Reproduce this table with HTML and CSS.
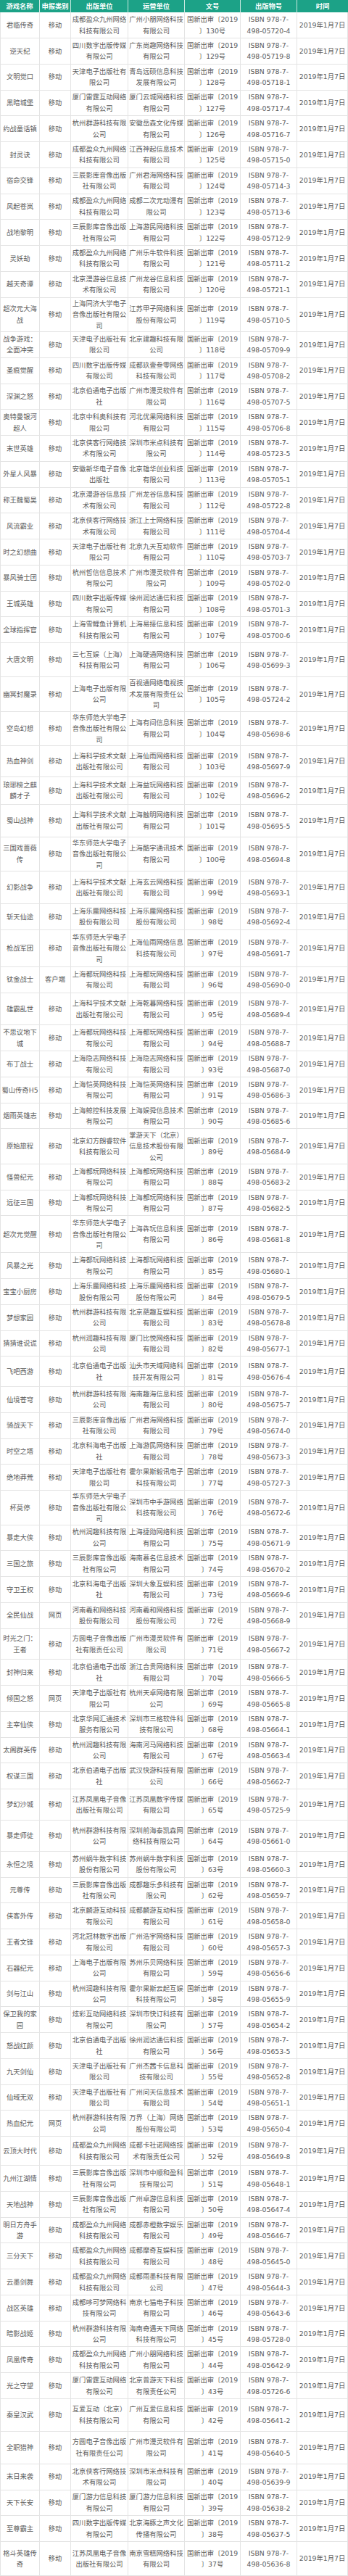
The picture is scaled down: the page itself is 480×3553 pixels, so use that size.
FILE: index.html
```html
<!DOCTYPE html>
<html lang="zh-CN">
<head>
<meta charset="utf-8">
<title>2019年1月国产网络游戏审批信息</title>
<link rel="stylesheet" href="styles.css">
</head>
<body>
<table class="games">
<colgroup>
<col class="c-name"><col class="c-type"><col class="c-pub"><col class="c-op"><col class="c-no"><col class="c-isbn"><col class="c-date">
</colgroup>
<thead>
<tr><th>游戏名称</th><th>申报类别</th><th>出版单位</th><th>运营单位</th><th>文号</th><th>出版物号</th><th>时间</th></tr>
</thead>
<tbody>
<tr><td>君临传奇</td><td>移动</td><td>成都盈众九州网络科技有限公司</td><td>广州小朋网络科技有限公司</td><td>国新出审〔2019<wbr>〕130号</td><td>ISBN 978-7-<wbr>498-05720-4</td><td>2019年1月7日</td></tr>
<tr><td>逆天纪</td><td>移动</td><td>四川数字出版传媒有限公司</td><td>广东尚趣网络科技有限公司</td><td>国新出审〔2019<wbr>〕129号</td><td>ISBN 978-7-<wbr>498-05719-8</td><td>2019年1月7日</td></tr>
<tr><td>文明觉口</td><td>移动</td><td>天津电子出版社有限公司</td><td>青岛远硕信息科技发展有限公司</td><td>国新出审〔2019<wbr>〕128号</td><td>ISBN 978-7-<wbr>498-05718-1</td><td>2019年1月7日</td></tr>
<tr><td>黑暗城堡</td><td>移动</td><td>厦门雷霆互动网络有限公司</td><td>厦门云城网络科技有限公司</td><td>国新出审〔2019<wbr>〕127号</td><td>ISBN 978-7-<wbr>498-05717-4</td><td>2019年1月7日</td></tr>
<tr><td>约战童话镇</td><td>移动</td><td>杭州群游科技有限公司</td><td>安徽岳森文化传媒有限公司</td><td>国新出审〔2019<wbr>〕126号</td><td>ISBN 978-7-<wbr>498-05716-7</td><td>2019年1月7日</td></tr>
<tr><td>封灵诀</td><td>移动</td><td>成都盈众九州网络科技有限公司</td><td>江西神起信息技术有限公司</td><td>国新出审〔2019<wbr>〕125号</td><td>ISBN 978-7-<wbr>498-05715-0</td><td>2019年1月7日</td></tr>
<tr><td>宿命交锋</td><td>移动</td><td>三辰影库音像出版社有限公司</td><td>广州君海网络科技有限公司</td><td>国新出审〔2019<wbr>〕124号</td><td>ISBN 978-7-<wbr>498-05714-3</td><td>2019年1月7日</td></tr>
<tr><td>风起苍岚</td><td>移动</td><td>成都盈众九州网络科技有限公司</td><td>成都二次元动漫有限公司</td><td>国新出审〔2019<wbr>〕123号</td><td>ISBN 978-7-<wbr>498-05713-6</td><td>2019年1月7日</td></tr>
<tr><td>战地黎明</td><td>移动</td><td>三辰影库音像出版社有限公司</td><td>上海游民网络科技有限公司</td><td>国新出审〔2019<wbr>〕122号</td><td>ISBN 978-7-<wbr>498-05712-9</td><td>2019年1月7日</td></tr>
<tr><td>灵妖劫</td><td>移动</td><td>成都盈众九州网络科技有限公司</td><td>广州乐牛软件科技有限公司</td><td>国新出审〔2019<wbr>〕121号</td><td>ISBN 978-7-<wbr>498-05711-2</td><td>2019年1月7日</td></tr>
<tr><td>越天奇谭</td><td>移动</td><td>北京漫游谷信息技术有限公司</td><td>广州龙谷信息科技有限公司</td><td>国新出审〔2019<wbr>〕120号</td><td>ISBN 978-7-<wbr>498-05721-1</td><td>2019年1月7日</td></tr>
<tr class="h47"><td>超次元大海战</td><td>移动</td><td>上海同济大学电子音像出版社有限公司</td><td>江苏甲子网络科技股份有限公司</td><td>国新出审〔2019<wbr>〕119号</td><td>ISBN 978-7-<wbr>498-05710-5</td><td>2019年1月7日</td></tr>
<tr><td>战争游戏：全面冲突</td><td>移动</td><td>天津电子出版社有限公司</td><td>北京建趣科技有限公司</td><td>国新出审〔2019<wbr>〕118号</td><td>ISBN 978-7-<wbr>498-05709-9</td><td>2019年1月7日</td></tr>
<tr><td>圣痕觉醒</td><td>移动</td><td>四川数字出版传媒有限公司</td><td>成都玖壹叁零网络科技有限公司</td><td>国新出审〔2019<wbr>〕117号</td><td>ISBN 978-7-<wbr>498-05708-2</td><td>2019年1月7日</td></tr>
<tr><td>深渊之怒</td><td>移动</td><td>北京伯通电子出版社</td><td>广州市漫灵软件有限公司</td><td>国新出审〔2019<wbr>〕116号</td><td>ISBN 978-7-<wbr>498-05707-5</td><td>2019年1月7日</td></tr>
<tr><td>奥特曼银河超人</td><td>移动</td><td>北京中科奥科技有限公司</td><td>河北优果网络科技有限公司</td><td>国新出审〔2019<wbr>〕115号</td><td>ISBN 978-7-<wbr>498-05706-8</td><td>2019年1月7日</td></tr>
<tr><td>末世英雄</td><td>移动</td><td>北京侠客行网络技术有限公司</td><td>深圳市米点科技有限公司</td><td>国新出审〔2019<wbr>〕114号</td><td>ISBN 978-7-<wbr>498-05723-5</td><td>2019年1月7日</td></tr>
<tr><td>外星人风暴</td><td>移动</td><td>安徽新华电子音像出版社</td><td>北京雄华创业科技有限公司</td><td>国新出审〔2019<wbr>〕113号</td><td>ISBN 978-7-<wbr>498-05705-1</td><td>2019年1月7日</td></tr>
<tr><td>称王魏蜀吴</td><td>移动</td><td>北京漫游谷信息技术有限公司</td><td>广州龙谷信息科技有限公司</td><td>国新出审〔2019<wbr>〕112号</td><td>ISBN 978-7-<wbr>498-05722-8</td><td>2019年1月7日</td></tr>
<tr><td>风流霸业</td><td>移动</td><td>北京侠客行网络技术有限公司</td><td>浙江上士网络科技有限公司</td><td>国新出审〔2019<wbr>〕111号</td><td>ISBN 978-7-<wbr>498-05704-4</td><td>2019年1月7日</td></tr>
<tr><td>时之幻想曲</td><td>移动</td><td>天津电子出版社有限公司</td><td>北京九天互动软件有限公司</td><td>国新出审〔2019<wbr>〕110号</td><td>ISBN 978-7-<wbr>498-05703-7</td><td>2019年1月7日</td></tr>
<tr><td>暴风骑士团</td><td>移动</td><td>杭州哲信信息技术有限公司</td><td>广州市漫灵软件有限公司</td><td>国新出审〔2019<wbr>〕109号</td><td>ISBN 978-7-<wbr>498-05702-0</td><td>2019年1月7日</td></tr>
<tr><td>王城英雄</td><td>移动</td><td>四川数字出版传媒有限公司</td><td>徐州润达通信科技有限公司</td><td>国新出审〔2019<wbr>〕108号</td><td>ISBN 978-7-<wbr>498-05701-3</td><td>2019年1月7日</td></tr>
<tr><td>全球指挥官</td><td>移动</td><td>上海雪鲤鱼计算机科技有限公司</td><td>上海易接信息科技有限公司</td><td>国新出审〔2019<wbr>〕107号</td><td>ISBN 978-7-<wbr>498-05700-6</td><td>2019年1月7日</td></tr>
<tr class="h47"><td>大唐文明</td><td>移动</td><td>三七互娱（上海）科技有限公司</td><td>上海硬通网络科技有限公司</td><td>国新出审〔2019<wbr>〕106号</td><td>ISBN 978-7-<wbr>498-05699-3</td><td>2019年1月7日</td></tr>
<tr class="h47"><td>幽冥封魔录</td><td>移动</td><td>上海电子出版有限公司</td><td>百视通网络电视技术发展有限责任公司</td><td>国新出审〔2019<wbr>〕105号</td><td>ISBN 978-7-<wbr>498-05724-2</td><td>2019年1月7日</td></tr>
<tr class="h47"><td>空岛幻想</td><td>移动</td><td>华东师范大学电子音像出版社有限公司</td><td>上海有间信息科技有限公司</td><td>国新出审〔2019<wbr>〕104号</td><td>ISBN 978-7-<wbr>498-05698-6</td><td>2019年1月7日</td></tr>
<tr class="h43"><td>热血神剑</td><td>移动</td><td>上海科学技术文献出版社有限公司</td><td>上海仙雨网络科技有限公司</td><td>国新出审〔2019<wbr>〕103号</td><td>ISBN 978-7-<wbr>498-05697-9</td><td>2019年1月7日</td></tr>
<tr class="h38"><td>琅琊榜之麒麟才子</td><td>移动</td><td>上海科学技术文献出版社有限公司</td><td>上海益玩网络科技有限公司</td><td>国新出审〔2019<wbr>〕102号</td><td>ISBN 978-7-<wbr>498-05696-2</td><td>2019年1月7日</td></tr>
<tr class="h45"><td>蜀山战神</td><td>移动</td><td>上海科学技术文献出版社有限公司</td><td>上海触明网络科技有限公司</td><td>国新出审〔2019<wbr>〕101号</td><td>ISBN 978-7-<wbr>498-05695-5</td><td>2019年1月7日</td></tr>
<tr class="h45"><td>三国戏蔷薇传</td><td>移动</td><td>华东师范大学电子音像出版社有限公司</td><td>上海酷宇通讯技术有限公司</td><td>国新出审〔2019<wbr>〕100号</td><td>ISBN 978-7-<wbr>498-05694-8</td><td>2019年1月7日</td></tr>
<tr class="h45"><td>幻影战争</td><td>移动</td><td>上海科学技术文献出版社有限公司</td><td>上海玄云网络科技有限公司</td><td>国新出审〔2019<wbr>〕99号</td><td>ISBN 978-7-<wbr>498-05693-1</td><td>2019年1月7日</td></tr>
<tr><td>斩天仙途</td><td>移动</td><td>上海乐蜃网络科技股份有限公司</td><td>上海乐蜃网络科技股份有限公司</td><td>国新出审〔2019<wbr>〕98号</td><td>ISBN 978-7-<wbr>498-05692-4</td><td>2019年1月7日</td></tr>
<tr class="h51"><td>枪战军团</td><td>移动</td><td>华东师范大学电子音像出版社有限公司</td><td>上海仙雨网络信息科技有限公司</td><td>国新出审〔2019<wbr>〕97号</td><td>ISBN 978-7-<wbr>498-05691-7</td><td>2019年1月7日</td></tr>
<tr><td>钛金战士</td><td>客户端</td><td>上海都玩网络科技有限公司</td><td>上海都玩网络科技有限公司</td><td>国新出审〔2019<wbr>〕96号</td><td>ISBN 978-7-<wbr>498-05690-0</td><td>2019年1月7日</td></tr>
<tr class="h45"><td>雄霸乱世</td><td>移动</td><td>上海科学技术文献出版社有限公司</td><td>上海乾暮网络科技有限公司</td><td>国新出审〔2019<wbr>〕95号</td><td>ISBN 978-7-<wbr>498-05689-4</td><td>2019年1月7日</td></tr>
<tr><td>不思议地下城</td><td>移动</td><td>上海都玩网络科技有限公司</td><td>上海都玩网络科技有限公司</td><td>国新出审〔2019<wbr>〕94号</td><td>ISBN 978-7-<wbr>498-05688-7</td><td>2019年1月7日</td></tr>
<tr><td>布丁战士</td><td>移动</td><td>上海隐志网络科技有限公司</td><td>上海隐志网络科技有限公司</td><td>国新出审〔2019<wbr>〕93号</td><td>ISBN 978-7-<wbr>498-05687-0</td><td>2019年1月7日</td></tr>
<tr><td>蜀山传奇H5</td><td>移动</td><td>上海恺英网络科技有限公司</td><td>上海恺英网络科技有限公司</td><td>国新出审〔2019<wbr>〕91号</td><td>ISBN 978-7-<wbr>498-05686-3</td><td>2019年1月7日</td></tr>
<tr><td>烟雨英雄志</td><td>移动</td><td>上海鲸控科技发展有限公司</td><td>上海娱舜信息技术有限公司</td><td>国新出审〔2019<wbr>〕90号</td><td>ISBN 978-7-<wbr>498-05685-6</td><td>2019年1月7日</td></tr>
<tr class="h48"><td>原始旅程</td><td>移动</td><td>北京幻方朗睿软件科技有限公司</td><td>掌游天下（北京）信息技术股份有限公司</td><td>国新出审〔2019<wbr>〕89号</td><td>ISBN 978-7-<wbr>498-05684-9</td><td>2019年1月7日</td></tr>
<tr><td>怪兽纪元</td><td>移动</td><td>上海都玩网络科技有限公司</td><td>上海都玩网络科技有限公司</td><td>国新出审〔2019<wbr>〕88号</td><td>ISBN 978-7-<wbr>498-05683-2</td><td>2019年1月7日</td></tr>
<tr><td>远征三国</td><td>移动</td><td>上海都玩网络科技有限公司</td><td>上海都玩网络科技有限公司</td><td>国新出审〔2019<wbr>〕87号</td><td>ISBN 978-7-<wbr>498-05682-5</td><td>2019年1月7日</td></tr>
<tr class="h51"><td>超次元觉醒</td><td>移动</td><td>华东师范大学电子音像出版社有限公司</td><td>上海犇玩信息科技有限公司</td><td>国新出审〔2019<wbr>〕86号</td><td>ISBN 978-7-<wbr>498-05681-8</td><td>2019年1月7日</td></tr>
<tr><td>风暴之光</td><td>移动</td><td>上海都玩网络科技有限公司</td><td>上海都玩网络科技有限公司</td><td>国新出审〔2019<wbr>〕85号</td><td>ISBN 978-7-<wbr>498-05680-1</td><td>2019年1月7日</td></tr>
<tr><td>宝宝小厨房</td><td>移动</td><td>上海乐蜃网络科技股份有限公司</td><td>上海乐蜃网络科技股份有限公司</td><td>国新出审〔2019<wbr>〕84号</td><td>ISBN 978-7-<wbr>498-05679-5</td><td>2019年1月7日</td></tr>
<tr><td>梦想家园</td><td>移动</td><td>杭州群游科技有限公司</td><td>北京葩趣互娱科技有限公司</td><td>国新出审〔2019<wbr>〕83号</td><td>ISBN 978-7-<wbr>498-05678-8</td><td>2019年1月7日</td></tr>
<tr><td>猜猜谁说谎</td><td>移动</td><td>杭州润趣科技有限公司</td><td>厦门比悦网络科技有限公司</td><td>国新出审〔2019<wbr>〕82号</td><td>ISBN 978-7-<wbr>498-05677-1</td><td>2019年1月7日</td></tr>
<tr class="h42"><td>飞吧西游</td><td>移动</td><td>北京伯通电子出版社</td><td>汕头市天域网络科技开发有限公司</td><td>国新出审〔2019<wbr>〕81号</td><td>ISBN 978-7-<wbr>498-05676-4</td><td>2019年1月7日</td></tr>
<tr><td>仙境苍穹</td><td>移动</td><td>杭州群游科技有限公司</td><td>海南趣海信息科技有限公司</td><td>国新出审〔2019<wbr>〕80号</td><td>ISBN 978-7-<wbr>498-05675-7</td><td>2019年1月7日</td></tr>
<tr><td>骑战天下</td><td>移动</td><td>三辰影库音像出版社有限公司</td><td>广州君海网络科技有限公司</td><td>国新出审〔2019<wbr>〕79号</td><td>ISBN 978-7-<wbr>498-05674-0</td><td>2019年1月7日</td></tr>
<tr><td>时空之塔</td><td>移动</td><td>北京科海电子出版社</td><td>上海游民网络科技有限公司</td><td>国新出审〔2019<wbr>〕78号</td><td>ISBN 978-7-<wbr>498-05673-3</td><td>2019年1月7日</td></tr>
<tr><td>绝地莽荒</td><td>移动</td><td>天津电子出版社有限公司</td><td>霍尔果斯毅讯电子科技有限公司</td><td>国新出审〔2019<wbr>〕77号</td><td>ISBN 978-7-<wbr>498-05727-3</td><td>2019年1月7日</td></tr>
<tr class="h47"><td>杯莫停</td><td>移动</td><td>华东师范大学电子音像出版社有限公司</td><td>深圳市中手游网络科技有限公司</td><td>国新出审〔2019<wbr>〕76号</td><td>ISBN 978-7-<wbr>498-05672-6</td><td>2019年1月7日</td></tr>
<tr><td>暴走大侠</td><td>移动</td><td>杭州润趣科技有限公司</td><td>上海捷勋网络科技有限公司</td><td>国新出审〔2019<wbr>〕75号</td><td>ISBN 978-7-<wbr>498-05671-9</td><td>2019年1月7日</td></tr>
<tr><td>三国之旅</td><td>移动</td><td>三辰影库音像出版社有限公司</td><td>海南慕名信息技术有限公司</td><td>国新出审〔2019<wbr>〕74号</td><td>ISBN 978-7-<wbr>498-05670-2</td><td>2019年1月7日</td></tr>
<tr><td>守卫王权</td><td>移动</td><td>北京科海电子出版社</td><td>深圳大象互娱科技有限公司</td><td>国新出审〔2019<wbr>〕73号</td><td>ISBN 978-7-<wbr>498-05669-6</td><td>2019年1月7日</td></tr>
<tr><td>全民仙战</td><td>网页</td><td>河南羲和网络科技股份有限公司</td><td>河南羲和网络科技股份有限公司</td><td>国新出审〔2019<wbr>〕72号</td><td>ISBN 978-7-<wbr>498-05668-9</td><td>2019年1月7日</td></tr>
<tr class="h43"><td>时光之门：王者</td><td>移动</td><td>方圆电子音像出版社有限责任公司</td><td>广州市漫灵软件有限公司</td><td>国新出审〔2019<wbr>〕71号</td><td>ISBN 978-7-<wbr>498-05667-2</td><td>2019年1月7日</td></tr>
<tr><td>封神归来</td><td>移动</td><td>北京伯通电子出版社</td><td>浙江合贵网络科技有限公司</td><td>国新出审〔2019<wbr>〕70号</td><td>ISBN 978-7-<wbr>498-05666-5</td><td>2019年1月7日</td></tr>
<tr><td>倾国之怒</td><td>网页</td><td>天津电子出版社有限公司</td><td>杭州天卓网络有限公司</td><td>国新出审〔2019<wbr>〕69号</td><td>ISBN 978-7-<wbr>498-05665-8</td><td>2019年1月7日</td></tr>
<tr><td>主宰仙侠</td><td>移动</td><td>北京华网汇通技术服务有限公司</td><td>深圳市三格软件科技有限公司</td><td>国新出审〔2019<wbr>〕68号</td><td>ISBN 978-7-<wbr>498-05664-1</td><td>2019年1月7日</td></tr>
<tr><td>太阁群英传</td><td>移动</td><td>杭州润趣科技有限公司</td><td>海南河马网络科技有限公司</td><td>国新出审〔2019<wbr>〕67号</td><td>ISBN 978-7-<wbr>498-05663-4</td><td>2019年1月7日</td></tr>
<tr><td>权谋三国</td><td>移动</td><td>北京伯通电子出版社</td><td>武汉快游科技有限公司</td><td>国新出审〔2019<wbr>〕66号</td><td>ISBN 978-7-<wbr>498-05662-7</td><td>2019年1月7日</td></tr>
<tr class="h43"><td>梦幻沙城</td><td>移动</td><td>江苏凤凰电子音像出版社有限公司</td><td>江苏凤凰数字传媒有限公司</td><td>国新出审〔2019<wbr>〕65号</td><td>ISBN 978-7-<wbr>498-05725-9</td><td>2019年1月7日</td></tr>
<tr class="h43"><td>暴走师徒</td><td>移动</td><td>杭州群游科技有限公司</td><td>深圳前海泰凯森网络科技有限公司</td><td>国新出审〔2019<wbr>〕64号</td><td>ISBN 978-7-<wbr>498-05661-0</td><td>2019年1月7日</td></tr>
<tr><td>永恒之境</td><td>移动</td><td>苏州蜗牛数字科技股份有限公司</td><td>苏州蜗牛数字科技股份有限公司</td><td>国新出审〔2019<wbr>〕63号</td><td>ISBN 978-7-<wbr>498-05660-3</td><td>2019年1月7日</td></tr>
<tr><td>元尊传</td><td>移动</td><td>三辰影库音像出版社有限公司</td><td>成都趣乐多科技有限公司</td><td>国新出审〔2019<wbr>〕62号</td><td>ISBN 978-7-<wbr>498-05659-7</td><td>2019年1月7日</td></tr>
<tr><td>侠客外传</td><td>移动</td><td>北京麟游互动科技有限公司</td><td>成都麟游互动科技有限公司</td><td>国新出审〔2019<wbr>〕61号</td><td>ISBN 978-7-<wbr>498-05658-0</td><td>2019年1月7日</td></tr>
<tr><td>王者文锋</td><td>移动</td><td>河北冠林数字出版有限公司</td><td>广州浩宇网络科技有限公司</td><td>国新出审〔2019<wbr>〕60号</td><td>ISBN 978-7-<wbr>498-05657-3</td><td>2019年1月7日</td></tr>
<tr><td>石器纪元</td><td>移动</td><td>上海电子出版有限公司</td><td>苏州乐贝网络科技有限公司</td><td>国新出审〔2019<wbr>〕59号</td><td>ISBN 978-7-<wbr>498-05656-6</td><td>2019年1月7日</td></tr>
<tr><td>剑与江山</td><td>移动</td><td>杭州润趣科技有限公司</td><td>霍尔果斯云起互娱科技有限公司</td><td>国新出审〔2019<wbr>〕58号</td><td>ISBN 978-7-<wbr>498-05655-9</td><td>2019年1月7日</td></tr>
<tr><td>保卫我的家园</td><td>移动</td><td>炫彩互动网络科技有限公司</td><td>深圳市快订科技有限公司</td><td>国新出审〔2019<wbr>〕57号</td><td>ISBN 978-7-<wbr>498-05654-2</td><td>2019年1月7日</td></tr>
<tr><td>怒战红颜</td><td>移动</td><td>北京伯通电子出版社</td><td>徐州润达通信科技有限公司</td><td>国新出审〔2019<wbr>〕56号</td><td>ISBN 978-7-<wbr>498-05653-5</td><td>2019年1月7日</td></tr>
<tr><td>九天剑仙</td><td>移动</td><td>天津电子出版社有限公司</td><td>广州杰茜卡信息科技有限公司</td><td>国新出审〔2019<wbr>〕55号</td><td>ISBN 978-7-<wbr>498-05652-8</td><td>2019年1月7日</td></tr>
<tr><td>仙域无双</td><td>移动</td><td>天津电子出版社有限公司</td><td>广州问天信息技术有限公司</td><td>国新出审〔2019<wbr>〕54号</td><td>ISBN 978-7-<wbr>498-05651-1</td><td>2019年1月7日</td></tr>
<tr><td>热血纪元</td><td>网页</td><td>杭州群游科技有限公司</td><td>万界（上海）网络股份有限公司</td><td>国新出审〔2019<wbr>〕53号</td><td>ISBN 978-7-<wbr>498-05650-4</td><td>2019年1月7日</td></tr>
<tr class="h40"><td>云顶大时代</td><td>移动</td><td>成都盈众九州网络科技有限公司</td><td>成都卡社诺网络技术有限责任公司</td><td>国新出审〔2019<wbr>〕52号</td><td>ISBN 978-7-<wbr>498-05649-8</td><td>2019年1月7日</td></tr>
<tr><td>九州江湖情</td><td>移动</td><td>三辰影库音像出版社有限公司</td><td>深圳市中顺和盈科技有限公司</td><td>国新出审〔2019<wbr>〕51号</td><td>ISBN 978-7-<wbr>498-05648-1</td><td>2019年1月7日</td></tr>
<tr><td>天地战神</td><td>移动</td><td>三辰影库音像出版社有限公司</td><td>广州卓游信息科技有限公司</td><td>国新出审〔2019<wbr>〕50号</td><td>ISBN 978-7-<wbr>498-05647-4</td><td>2019年1月7日</td></tr>
<tr><td>明日方舟手游</td><td>移动</td><td>成都盈众九州网络科技有限公司</td><td>成都赤橙数字娱乐有限公司</td><td>国新出审〔2019<wbr>〕49号</td><td>ISBN 978-7-<wbr>498-05646-7</td><td>2019年1月7日</td></tr>
<tr><td>三分天下</td><td>移动</td><td>成都盈众九州网络科技有限公司</td><td>成都摩奇互娱科技有限公司</td><td>国新出审〔2019<wbr>〕48号</td><td>ISBN 978-7-<wbr>498-05645-0</td><td>2019年1月7日</td></tr>
<tr><td>云墨剑舞</td><td>移动</td><td>成都盈众九州网络科技有限公司</td><td>成都雨墨科技有限公司</td><td>国新出审〔2019<wbr>〕47号</td><td>ISBN 978-7-<wbr>498-05644-3</td><td>2019年1月7日</td></tr>
<tr><td>战区英雄</td><td>移动</td><td>成都哆可梦网络科技有限公司</td><td>南京七猫电子科技有限公司</td><td>国新出审〔2019<wbr>〕46号</td><td>ISBN 978-7-<wbr>498-05643-6</td><td>2019年1月7日</td></tr>
<tr><td>暗影战姬</td><td>移动</td><td>杭州群游科技有限公司</td><td>海南奇遇天下网络科技有限公司</td><td>国新出审〔2019<wbr>〕45号</td><td>ISBN 978-7-<wbr>498-05728-0</td><td>2019年1月7日</td></tr>
<tr><td>凤凰传奇</td><td>移动</td><td>成都盈众九州网络科技有限公司</td><td>广州小朋网络科技有限公司</td><td>国新出审〔2019<wbr>〕44号</td><td>ISBN 978-7-<wbr>498-05642-9</td><td>2019年1月7日</td></tr>
<tr><td>光之守望</td><td>移动</td><td>厦门雷霆互动网络有限公司</td><td>北京普游天下科技有限责任公司</td><td>国新出审〔2019<wbr>〕43号</td><td>ISBN 978-7-<wbr>498-05726-6</td><td>2019年1月7日</td></tr>
<tr class="h45"><td>秦皇汉武</td><td>移动</td><td>互爱互动（北京）科技有限公司</td><td>广州互爱信息科技有限公司</td><td>国新出审〔2019<wbr>〕42号</td><td>ISBN 978-7-<wbr>498-05641-2</td><td>2019年1月7日</td></tr>
<tr class="h45"><td>全职猎神</td><td>移动</td><td>方圆电子音像出版社有限责任公司</td><td>广州市漫灵软件有限公司</td><td>国新出审〔2019<wbr>〕41号</td><td>ISBN 978-7-<wbr>498-05640-5</td><td>2019年1月7日</td></tr>
<tr><td>末日来袭</td><td>移动</td><td>北京侠客行网络技术有限公司</td><td>深圳市米点科技有限公司</td><td>国新出审〔2019<wbr>〕40号</td><td>ISBN 978-7-<wbr>498-05639-9</td><td>2019年1月7日</td></tr>
<tr><td>天下长安</td><td>移动</td><td>厦门游力信息科技有限公司</td><td>厦门游力信息科技有限公司</td><td>国新出审〔2019<wbr>〕39号</td><td>ISBN 978-7-<wbr>498-05638-2</td><td>2019年1月7日</td></tr>
<tr><td>至尊霸主</td><td>移动</td><td>四川数字出版传媒有限公司</td><td>北京海豚之声文化传播有限公司</td><td>国新出审〔2019<wbr>〕38号</td><td>ISBN 978-7-<wbr>498-05637-5</td><td>2019年1月7日</td></tr>
<tr class="h47"><td>格斗英雄传奇</td><td>移动</td><td>江苏凤凰电子音像出版社有限公司</td><td>南京雪糕网络科技有限公司</td><td>国新出审〔2019<wbr>〕37号</td><td>ISBN 978-7-<wbr>498-05636-8</td><td>2019年1月7日</td></tr>
</tbody>
</table>
</body>
</html>
```

FILE: styles.css
```css
html, body {
  margin: 0;
  padding: 0;
  background: #ffffff;
}

body {
  width: 480px;
  font-family: "DejaVu Sans", "Noto Sans CJK SC", sans-serif;
  font-size: 9.3px;
  line-height: 15.5px;
  color: #5b5b5b;
}

.games {
  width: 480px;
  table-layout: fixed;
  border-collapse: separate;
  border-spacing: 0;
}

.c-name { width: 55px; }
.c-type { width: 43px; }
.c-pub  { width: 79px; }
.c-op   { width: 78px; }
.c-no   { width: 77px; }
.c-isbn { width: 78px; }
.c-date { width: 70px; }

.games th,
.games td {
  padding: 0 1px;
  text-align: center;
  vertical-align: middle;
  word-wrap: break-word;
}

.games thead tr {
  height: 17.3px;
}

.games th {
  background: #1ca287;
  color: #ffffff;
  font-weight: bold;
  line-height: 15px;
  border-right: 1px solid #c9e9e0;
}

.games th:last-child {
  border-right: none;
}

.games td {
  border-right: 1px solid #e4e4e4;
  border-bottom: 1px solid #e4e4e4;
}

.games td:first-child {
  border-left: 1px solid #e4e4e4;
}

.games tbody tr { height: 35.75px; }
.games tbody tr.h38 { height: 37.7px; }
.games tbody tr.h40 { height: 40px; }
.games tbody tr.h42 { height: 41.7px; }
.games tbody tr.h43 { height: 42.9px; }
.games tbody tr.h45 { height: 44.9px; }
.games tbody tr.h47 { height: 47.2px; }
.games tbody tr.h48 { height: 48.4px; }
.games tbody tr.h51 { height: 51px; }
```
